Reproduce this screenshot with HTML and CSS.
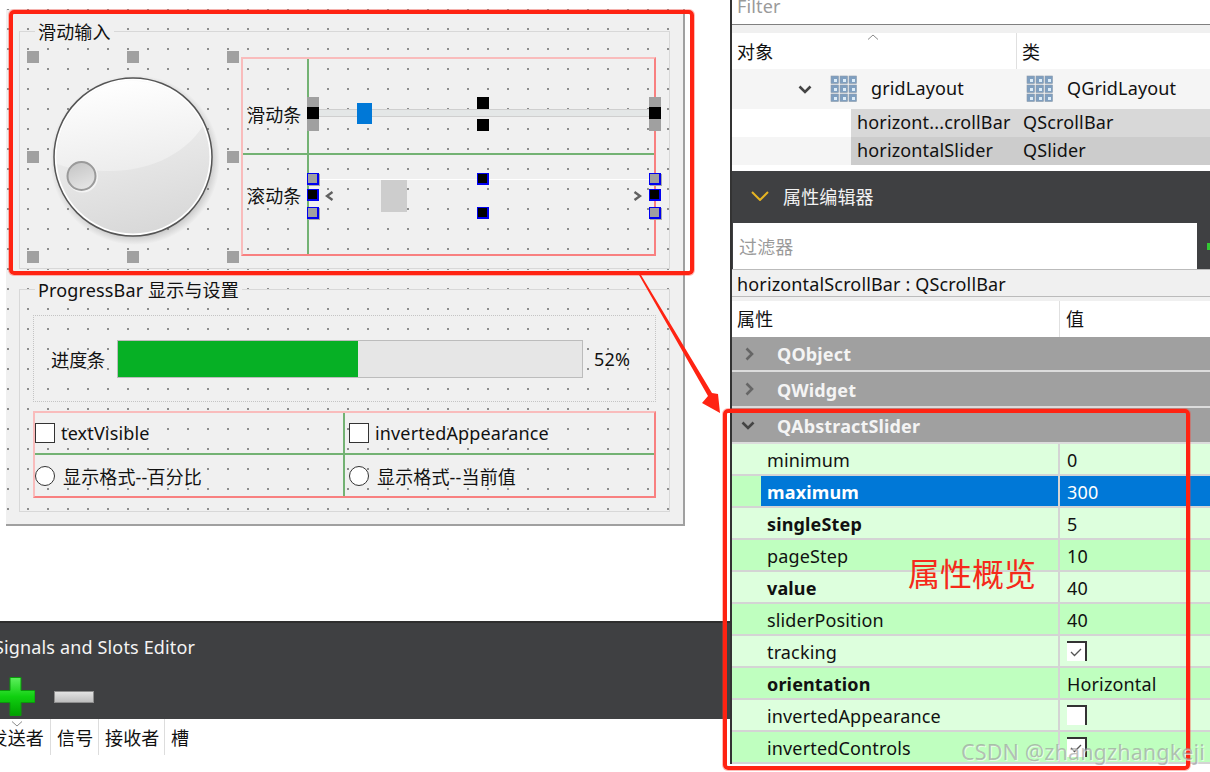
FILE: index.html
```html
<!DOCTYPE html>
<html lang="zh">
<head>
<meta charset="utf-8">
<title>Qt Designer</title>
<link rel="stylesheet" href="styles.css">
</head>
<body>
<div class="page">
  <section class="left">
    <div class="form">
      <div class="group group-input">
        <span class="group-title">滑动输入</span>
        <div class="dial">
          <svg width="200" height="200" viewBox="0 0 200 200">
            <defs>
              <linearGradient id="dialFill" x1="0.35" y1="0" x2="0.6" y2="1">
                <stop offset="0" stop-color="#f6f6f6"/>
                <stop offset="1" stop-color="#d8d8d8"/>
              </linearGradient>
              <linearGradient id="dialGloss" x1="0.35" y1="0" x2="0.6" y2="1">
                <stop offset="0" stop-color="#ffffff"/>
                <stop offset="1" stop-color="#ececec"/>
              </linearGradient>
              <radialGradient id="dialShadow" cx="0.5" cy="0.5" r="0.5">
                <stop offset="0.9" stop-color="#777" stop-opacity="0.3"/>
                <stop offset="1" stop-color="#888" stop-opacity="0"/>
              </radialGradient>
              <linearGradient id="knobFill" x1="0.3" y1="0" x2="0.7" y2="1">
                <stop offset="0" stop-color="#c6c6c6"/>
                <stop offset="1" stop-color="#e6e6e6"/>
              </linearGradient>
            </defs>
            <circle cx="102" cy="103" r="85" fill="url(#dialShadow)"/>
            <circle cx="100" cy="100" r="79" fill="#fff" stroke="#555" stroke-width="1.500"/>
            <circle cx="100" cy="100" r="76.500" fill="url(#dialFill)"/>
            <path d="M24 107A76.500 76.500 0 0 1 170 69C150 100 112 114 78 114C58 114 40 113 24 107Z" fill="url(#dialGloss)"/>
            <circle cx="49.500" cy="120" r="15.500" fill="#f4f4f4"/>
            <circle cx="48.500" cy="119" r="14" fill="url(#knobFill)" stroke="#9a9a9a" stroke-width="2"/>
          </svg>
          <i class="hd grey dx-l dy-t"></i><i class="hd grey dx-m dy-t"></i><i class="hd grey dx-r dy-t"></i>
          <i class="hd grey dx-l dy-m"></i><i class="hd grey dx-r dy-m"></i>
          <i class="hd grey dx-l dy-b"></i><i class="hd grey dx-m dy-b"></i><i class="hd grey dx-r dy-b"></i>
        </div>
        <div class="sliders">
          <div class="label-cell label-top">滑动条</div>
          <div class="ctl-cell">
            <div class="groove"><span class="thumb"></span></div>
          </div>
          <div class="label-cell label-bottom line-top">滚动条</div>
          <div class="ctl-cell line-top">
            <div class="scrollbar">
              <svg class="arrow" width="9" height="10" viewBox="0 0 9 10"><path d="M7.500 1L2 5l5.500 4" fill="none" stroke="#606060" stroke-width="2.400"/></svg>
              <span class="scroll-thumb"></span>
              <svg class="arrow arrow-right" width="9" height="10" viewBox="0 0 9 10"><path d="M1.500 1L7 5 1.500 9" fill="none" stroke="#606060" stroke-width="2.400"/></svg>
            </div>
          </div>
          <i class="hd grey tall hx-l hy-97"></i><i class="hd black hx-l hy-107"></i>
          <i class="hd black hx-m hy-97"></i><i class="hd black hx-m hy-119"></i>
          <i class="hd grey tall hx-r hy-97"></i><i class="hd black hx-r hy-107"></i>
          <i class="hd grey blue hx-l hy-173"></i><i class="hd black blue hx-l hy-189"></i><i class="hd grey blue hx-l hy-207"></i>
          <i class="hd black blue hx-m hy-173"></i><i class="hd black blue hx-m hy-207"></i>
          <i class="hd grey blue hx-r hy-173"></i><i class="hd black blue hx-r hy-189"></i><i class="hd grey blue hx-r hy-207"></i>
        </div>
      </div>
      <div class="group group-progress">
        <span class="group-title">ProgressBar 显示与设置</span>
        <div class="progress-row">
          <span class="progress-label">进度条</span>
          <div class="progress"><span class="chunk"></span></div>
          <span class="percent">52%</span>
        </div>
        <div class="options">
          <div class="opt"><span class="check"></span><span>textVisible</span></div>
          <div class="opt col2"><span class="check"></span><span>invertedAppearance</span></div>
          <div class="opt row2"><span class="radio"></span><span>显示格式--百分比</span></div>
          <div class="opt col2 row2"><span class="radio"></span><span>显示格式--当前值</span></div>
        </div>
      </div>
    </div>
    <div class="signals">
      <div class="signals-title">Signals and Slots Editor</div>
      <div class="signals-tools">
        <svg width="39" height="39" viewBox="0 0 39 39">
          <defs>
            <linearGradient id="plusFill" x1="0" y1="0" x2="0" y2="1">
              <stop offset="0" stop-color="#5df05d"/>
              <stop offset="0.5" stop-color="#10d010"/>
              <stop offset="1" stop-color="#00a000"/>
            </linearGradient>
          </defs>
          <path d="M14 0.500h11v13h14v12h-14v13h-11v-13h-14v-12h14z" fill="url(#plusFill)" stroke="#0a9a0a"/>
        </svg>
        <svg class="minus" width="40" height="12" viewBox="0 0 40 12">
          <defs>
            <linearGradient id="minusFill" x1="0" y1="0" x2="0" y2="1">
              <stop offset="0" stop-color="#e4e4e4"/>
              <stop offset="1" stop-color="#bcbcbc"/>
            </linearGradient>
          </defs>
          <rect x="0.500" y="0.500" width="39" height="11" fill="url(#minusFill)" stroke="#8e8e8e"/>
        </svg>
      </div>
    </div>
    <div class="conn-head">
      <svg class="sort-down" width="12" height="6" viewBox="0 0 12 6"><path d="M1 .5l5 4.500 5-4.500" fill="none" stroke="#8a8a8a"/></svg>
      <span class="conn-c c1">发送者</span>
      <span class="conn-c c2">信号</span>
      <span class="conn-c c3">接收者</span>
      <span class="conn-c c4">槽</span>
    </div>
  </section>

  <section class="right">
    <div class="obj-filter"><span>Filter</span></div>
    <div class="strip"></div>
    <div class="obj-head">
      <span class="obj-h1">对象</span>
      <span class="obj-h2">类</span>
      <svg class="sort-up" width="12" height="6" viewBox="0 0 12 6"><path d="M1 5.500l5-4.500 5 4.500" fill="none" stroke="#8a8a8a"/></svg>
    </div>
    <div class="obj-row grid-row">
      <div class="obj-c1">
        <svg class="tree-chev" width="14" height="9" viewBox="0 0 14 9"><path d="M1.500 1.500L7 7l5.500-5.500" fill="none" stroke="#444" stroke-width="2.600"/></svg>
        <svg class="grid-ico" width="28" height="28" viewBox="0 0 28 28">
          <g fill="#7f9fc0" stroke="#8a9aaa" stroke-width="0.600">
            <rect x="1" y="1" width="7.500" height="7.500"/><rect x="10" y="1" width="7.500" height="7.500"/><rect x="19" y="1" width="7.500" height="7.500"/>
            <rect x="1" y="10" width="7.500" height="7.500"/><rect x="10" y="10" width="7.500" height="7.500"/><rect x="19" y="10" width="7.500" height="7.500"/>
            <rect x="1" y="19" width="7.500" height="7.500"/><rect x="10" y="19" width="7.500" height="7.500"/><rect x="19" y="19" width="7.500" height="7.500"/>
          </g>
          <g fill="#dcecf8">
            <rect x="4" y="4" width="3" height="3"/><rect x="13" y="4" width="3" height="3"/><rect x="22" y="4" width="3" height="3"/>
            <rect x="4" y="13" width="3" height="3"/><rect x="13" y="13" width="3" height="3"/><rect x="22" y="13" width="3" height="3"/>
            <rect x="4" y="22" width="3" height="3"/><rect x="13" y="22" width="3" height="3"/><rect x="22" y="22" width="3" height="3"/>
          </g>
        </svg>
        <span>gridLayout</span>
      </div>
      <div class="obj-c2">
        <svg class="grid-ico" width="28" height="28" viewBox="0 0 28 28">
          <g fill="#7f9fc0" stroke="#8a9aaa" stroke-width="0.600">
            <rect x="1" y="1" width="7.500" height="7.500"/><rect x="10" y="1" width="7.500" height="7.500"/><rect x="19" y="1" width="7.500" height="7.500"/>
            <rect x="1" y="10" width="7.500" height="7.500"/><rect x="10" y="10" width="7.500" height="7.500"/><rect x="19" y="10" width="7.500" height="7.500"/>
            <rect x="1" y="19" width="7.500" height="7.500"/><rect x="10" y="19" width="7.500" height="7.500"/><rect x="19" y="19" width="7.500" height="7.500"/>
          </g>
          <g fill="#dcecf8">
            <rect x="4" y="4" width="3" height="3"/><rect x="13" y="4" width="3" height="3"/><rect x="22" y="4" width="3" height="3"/>
            <rect x="4" y="13" width="3" height="3"/><rect x="13" y="13" width="3" height="3"/><rect x="22" y="13" width="3" height="3"/>
            <rect x="4" y="22" width="3" height="3"/><rect x="13" y="22" width="3" height="3"/><rect x="22" y="22" width="3" height="3"/>
          </g>
        </svg>
        <span>QGridLayout</span>
      </div>
    </div>
    <div class="child-row"><div class="child sel-a"><span class="child-name">horizont...crollBar</span><span>QScrollBar</span></div></div>
    <div class="child-row alt"><div class="child sel-b"><span class="child-name">horizontalSlider</span><span>QSlider</span></div></div>
    <div class="gap-white"></div>
    <div class="prop-dock">
      <div class="dock-title">
        <svg width="18" height="10" viewBox="0 0 18 10"><path d="M1 1l8 8 8-8" fill="none" stroke="#e6b422" stroke-width="2"/></svg>
        <span>属性编辑器</span>
      </div>
      <div class="dock-tools">
        <div class="prop-filter">过滤器</div>
        <span class="plus-sliver"></span>
      </div>
    </div>
    <div class="class-line">horizontalScrollBar : QScrollBar</div>
    <div class="prop-head"><span class="ph1">属性</span><span class="ph2">值</span></div>
    <div class="grp first">
      <svg width="9" height="14" viewBox="0 0 9 14"><path d="M1.500 1.500L7 7l-5.500 5.500" fill="none" stroke="#666" stroke-width="2.600"/></svg>
      <span>QObject</span>
    </div>
    <div class="grp">
      <svg width="9" height="14" viewBox="0 0 9 14"><path d="M1.500 1.500L7 7l-5.500 5.500" fill="none" stroke="#666" stroke-width="2.600"/></svg>
      <span>QWidget</span>
    </div>
    <div class="grp open">
      <svg width="14" height="9" viewBox="0 0 14 9"><path d="M1.500 1.500L7 7l5.500-5.500" fill="none" stroke="#444" stroke-width="2.600"/></svg>
      <span>QAbstractSlider</span>
    </div>
    <div class="prop light"><span class="pn">minimum</span><span class="pv">0</span></div>
    <div class="prop dark current"><span class="pn b">maximum</span><span class="pv">300</span></div>
    <div class="prop light"><span class="pn b">singleStep</span><span class="pv">5</span></div>
    <div class="prop dark"><span class="pn">pageStep</span><span class="pv">10</span></div>
    <div class="prop light"><span class="pn b">value</span><span class="pv">40</span></div>
    <div class="prop dark"><span class="pn">sliderPosition</span><span class="pv">40</span></div>
    <div class="prop light"><span class="pn">tracking</span><span class="pv"><span class="tick"><svg width="14" height="12" viewBox="0 0 14 12"><path d="M2 6l3.500 3.500L12 3" fill="none" stroke="#555" stroke-width="1.300"/></svg></span></span></div>
    <div class="prop dark"><span class="pn b">orientation</span><span class="pv">Horizontal</span></div>
    <div class="prop light"><span class="pn">invertedAppearance</span><span class="pv"><span class="tick"></span></span></div>
    <div class="prop dark"><span class="pn">invertedControls</span><span class="pv"><span class="tick"><svg width="14" height="12" viewBox="0 0 14 12"><path d="M2 6l3.500 3.500L12 3" fill="none" stroke="#555" stroke-width="1.300"/></svg></span></span></div>
  </section>

  <div class="mark mark-top"></div>
  <div class="mark mark-right"></div>
  <svg class="mark-arrow" width="95" height="145" viewBox="0 0 95 145">
    <path d="M8 0L10 0L81 118L87 119L89 138L71 128L77 121Z" fill="#ff2312"/>
  </svg>
  <div class="note">属性概览</div>
  <div class="watermark">CSDN @zhangzhangkeji</div>
</div>
</body>
</html>
```
FILE: styles.css
```css
* { box-sizing: border-box; }
html, body { margin: 0; padding: 0; background: #fff; }
body {
  font-family: "Noto Sans", "Noto Sans CJK SC", sans-serif;
  font-size: 18px;
  letter-spacing: 0.15px;
  color: #111;
}
.page {
  position: relative;
  display: flex;
  width: 1210px;
  height: 772px;
  overflow: hidden;
  background: #fff;
}
.left { width: 730px; flex: none; }
.right {
  width: 480px;
  flex: none;
  height: 764px;
  border-left: 2px solid #333;
}

/* form */
.form {
  width: 679px;
  height: 517px;
  margin: 9px 0 0 6px;
  padding: 22px 0 0 13px;
  border-right: 2px solid #a0a0a0;
  border-bottom: 2px solid #a0a0a0;
  background-color: #f0f0f0;
  background-image: conic-gradient(at 2px 2px, transparent 75%, #8c8c8c 0);
  background-size: 20px 20px;
  background-position: 1px 19px;
}
.group {
  position: relative;
  width: 651px;
  border: 1px solid #d8d8d8;
}
.group-title {
  position: absolute;
  top: -13px;
  left: 15px;
  padding: 0 3px;
  line-height: 26px;
  white-space: nowrap;
  background: #f0f0f0;
}
.group-input {
  display: flex;
  height: 238px;
  padding: 25px 0 0 13px;
}
.group-progress {
  height: 223px;
  margin-top: 20px;
  padding: 25px 0 0 13px;
}

/* dial */
.dial { position: relative; width: 200px; height: 200px; flex: none; }
.dial svg { display: block; }
.hd { position: absolute; display: block; width: 12px; height: 12px; }
.grey { background: #a0a0a0; }
.black { background: #000; }
.tall { height: 34px; }
.blue {
  border-style: solid;
  border-color: #0000f0;
  border-width: 1px 2px 2px 1px;
}
.grey.blue { box-shadow: 1px 1px 0 #a8a8a8; }
.dx-l { left: -6px; }
.dx-m { left: 94px; }
.dx-r { left: 194px; }
.dy-t { top: -6px; }
.dy-m { top: 94px; }
.dy-b { top: 194px; }

/* slider / scrollbar layout */
.sliders {
  position: relative;
  display: grid;
  grid-template-columns: 64px 347px;
  grid-template-rows: 94px 101px;
  width: 415px;
  height: 199px;
  margin-left: 8px;
  border: 2px solid;
  border-color: #f9bcbc #f88080 #f88080 #f9bcbc;
}
.label-cell { display: flex; align-items: center; padding-left: 4px; }
.label-top { padding-top: 15px; }
.label-bottom { padding-bottom: 20px; }
.ctl-cell { border-left: 2px solid #73b273; }
.line-top { border-top: 2px solid #73b273; }
.groove {
  position: relative;
  height: 8px;
  margin-top: 50px;
  background: #e4e7e7;
  border-top: 1px solid #cfcfcf;
  border-bottom: 1px solid #cfcfcf;
}
.thumb {
  position: absolute;
  left: 48px;
  top: -7px;
  width: 15px;
  height: 21px;
  background: #0078d7;
}
.scrollbar {
  display: flex;
  align-items: center;
  height: 33px;
  margin-top: 24px;
  padding: 0 12px 0 16px;
  border-top: 1px solid #fff;
}
.arrow { flex: none; }
.arrow-right { margin-left: auto; }
.scroll-thumb {
  width: 26px;
  height: 32px;
  margin-left: 47px;
  background: #cdcdcd;
}
.hx-l { left: 64px; }
.hx-m { left: 234px; }
.hx-r { left: 406px; }
.hy-97 { top: 38px; }
.hy-107 { top: 48px; }
.hy-119 { top: 60px; }
.hy-173 { top: 114px; }
.hy-189 { top: 130px; }
.hy-207 { top: 148px; }

/* progress */
.progress-row {
  display: flex;
  align-items: center;
  width: 623px;
  height: 87px;
  padding-left: 17px;
  border: 1px dotted #c4c4c4;
}
.progress-label { width: 54px; white-space: nowrap; }
.progress {
  width: 466px;
  height: 38px;
  margin-left: 12px;
  border: 1px solid #bcbcbc;
  background: #e6e6e6;
}
.chunk { display: block; width: 240px; height: 100%; background: #06b025; }
.percent { margin-left: 11px; }
.options {
  display: grid;
  grid-template-columns: 308px 311px;
  grid-template-rows: 40px 43px;
  width: 623px;
  height: 87px;
  margin-top: 9px;
  border: 2px solid;
  border-color: #f9bcbc #f88080 #f88080 #f9bcbc;
}
.opt { display: flex; align-items: center; gap: 6px; white-space: nowrap; }
.col2 { border-left: 2px solid #73b273; padding-left: 4px; }
.row2 { border-top: 2px solid #73b273; gap: 8px; }
.check { width: 20px; height: 20px; flex: none; background: #fff; border: 1px solid #333; }
.radio { width: 20px; height: 20px; flex: none; background: #fff; border: 1px solid #333; border-radius: 50%; }

/* signals */
.signals {
  height: 98px;
  margin-top: 95px;
  color: #f4f4f4;
  background: #3f4042;
  border-top: 2px solid #2e2e2e;
}
.signals-title { height: 54px; margin-left: -6px; line-height: 48px; white-space: nowrap; }
.signals-tools { display: flex; align-items: center; margin-left: -4px; }
.signals-tools svg { display: block; flex: none; }
.minus { margin-left: 19px; }
.conn-head { position: relative; display: flex; height: 36px; }
.sort-down { position: absolute; left: 11px; top: 2px; }
.conn-c { padding-left: 6px; line-height: 38px; border-right: 1px solid #ddd; white-space: nowrap; }
.c1 { width: 51px; padding: 0 6px 0 0; direction: rtl; overflow: hidden; }
.c2 { width: 48px; }
.c3 { width: 66px; }
.c4 { border: 0; }

/* object inspector */
.obj-filter {
  height: 25px;
  padding-left: 5px;
  line-height: 12px;
  color: #9a9a9a;
  border-bottom: 1px solid #808080;
}
.strip { height: 8px; background: #f0f0f0; }
.obj-head { position: relative; display: flex; height: 36px; line-height: 38px; }
.obj-h1 { width: 285px; padding-left: 5px; border-right: 1px solid #e0e0e0; }
.obj-h2 { padding-left: 5px; }
.sort-up { position: absolute; left: 135px; top: 1px; }
.obj-row { display: flex; height: 40px; background: #f5f5f5; }
.obj-c1 { display: flex; align-items: center; width: 285px; padding-left: 66px; }
.obj-c2 { display: flex; align-items: center; padding-left: 9px; }
.obj-row span { margin-top: -2px; }
.tree-chev { flex: none; margin-right: 18px; }
.grid-ico { flex: none; margin-right: 13px; }
.child-row { height: 28px; padding-left: 119px; }
.child-row.alt { background: #f5f5f5; }
.child { display: flex; align-items: center; height: 28px; padding: 0 0 2px 6px; white-space: nowrap; }
.sel-a { background: #d8d8d8; }
.sel-b { background: #cccccc; }
.child-name { width: 166px; }
.gap-white { height: 6px; }
.prop-dock { height: 98px; color: #f2f2f2; background: #3f4042; }
.dock-title { display: flex; align-items: center; gap: 14px; height: 52px; padding: 0 0 2px 19px; }
.dock-tools { display: flex; align-items: center; }
.prop-filter {
  width: 464px;
  height: 46px;
  margin-left: 1px;
  padding-left: 6px;
  line-height: 48px;
  color: #9a9a9a;
  background: #fff;
}
.plus-sliver { width: 3px; height: 7px; margin-left: 10px; background: #33c933; }
.class-line {
  height: 28px;
  padding-left: 5px;
  line-height: 28px;
  white-space: nowrap;
  background: #f0f0f0;
  border-top: 1px solid #bbb;
  border-bottom: 1px solid #bbb;
}
.prop-head {
  display: flex;
  height: 40px;
  line-height: 36px;
  border-top: 4px solid #f0f0f0;
}
.ph1 { width: 328px; padding-left: 5px; border-right: 1px solid #e0e0e0; }
.ph2 { padding-left: 6px; }
.grp {
  display: flex;
  align-items: center;
  height: 36px;
  padding-left: 13px;
  font-weight: 700;
  color: #f4f4f4;
  background: #a0a0a0;
  border-bottom: 2px solid #dcdcdc;
}
.grp span { margin-top: 1px; }
.grp.first { height: 35px; }
.grp.first span { margin-top: 0; }
.grp svg { flex: none; margin-right: 23px; }
.grp.open { padding-left: 9px; }
.grp.open svg { margin-right: 22px; }
.prop {
  display: flex;
  height: 32px;
  line-height: 32px;
  border-bottom: 2px solid #d4d4d4;
  white-space: nowrap;
}
.light { background: #ddffdd; }
.dark { background: #bfffbf; }
.pn { width: 328px; height: 30px; padding-left: 35px; border-right: 2px solid #d4d4d4; }
.pv { padding-left: 7px; }
.b { font-weight: 700; }
.current .pn { width: 299px; margin-left: 29px; padding-left: 6px; color: #fff; background: #0078d7; }
.current .pv { flex: 1; height: 30px; color: #fff; background: #0078d7; }
.tick {
  display: block;
  width: 20px;
  height: 20px;
  margin-top: 5px;
  padding: 3px 0 0 2px;
  background: #fff;
  border-top: 2px solid #333;
  border-right: 2px solid #333;
}
.tick svg { display: block; }

/* annotations */
.mark {
  position: absolute;
  border: 4px solid #ff2312;
  border-radius: 5px;
  box-shadow: 0 0 0 1px rgba(255, 60, 50, 0.35);
}
.mark-top { left: 9px; top: 10px; width: 685px; height: 265px; }
.mark-right { left: 723px; top: 409px; width: 467px; height: 361px; }
.mark-arrow { position: absolute; left: 631px; top: 275px; }
.note {
  position: absolute;
  left: 908px;
  top: 552px;
  font-size: 32px;
  line-height: 44px;
  letter-spacing: 0;
  color: #f52a1a;
}
.watermark {
  position: absolute;
  left: 961px;
  top: 738px;
  font-size: 21.500px;
  line-height: 28px;
  white-space: nowrap;
  color: rgba(150, 150, 150, 0.6);
  text-shadow: 1px 1px 0 rgba(255, 255, 255, 0.6);
}
```
